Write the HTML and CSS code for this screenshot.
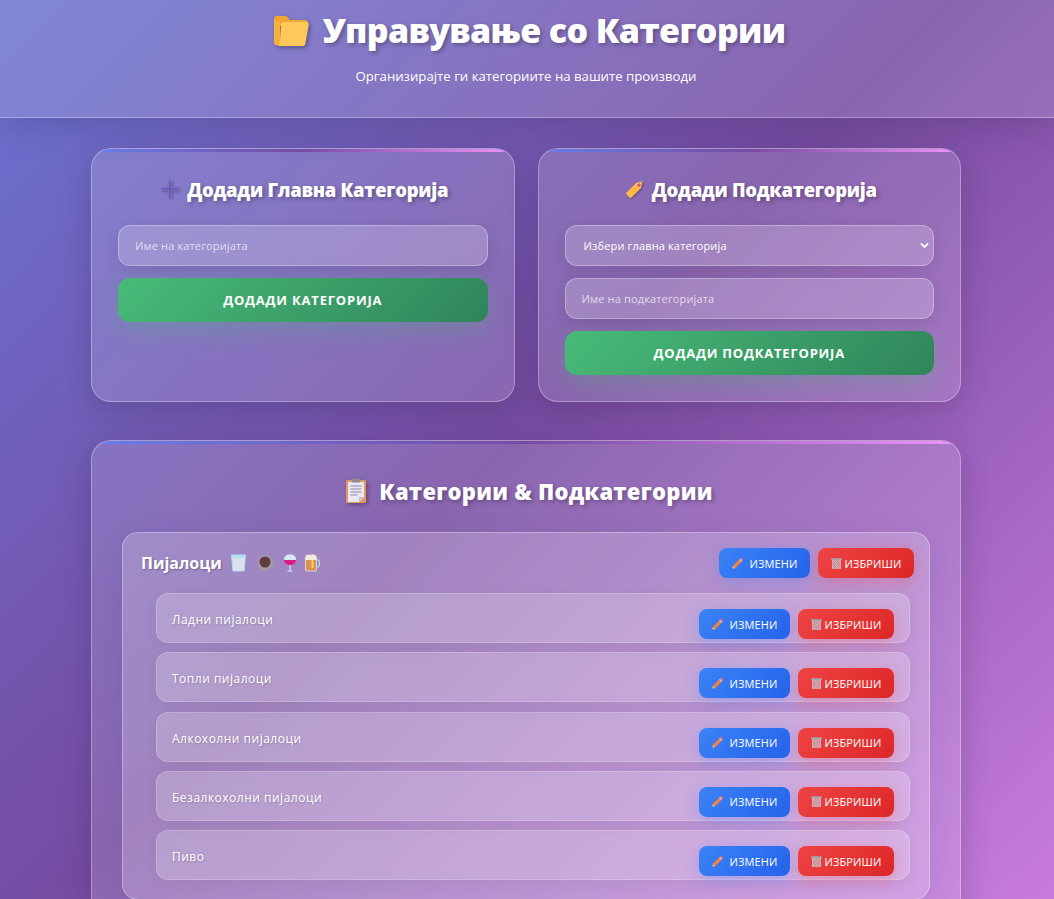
FILE: index.html
```html
<!DOCTYPE html>
<html lang="mk">
<head>
<meta charset="utf-8">
<title>Управување со Категории</title>
<link rel="stylesheet" href="styles.css">
</head>
<body>
<svg class="defs" width="0" height="0" aria-hidden="true">
  <defs>
    <symbol id="pencil" viewBox="0 0 16 16">
      <path d="M1.500 14.500l.8-3.600 2.800 2.800z" fill="#f6c9a0"/>
      <path d="M1.500 14.500l.3-1.400 1.100 1.100z" fill="#555"/>
      <path d="M2.300 10.900l7.600-7.600 2.800 2.800-7.600 7.600z" fill="#f7813c"/>
      <path d="M9.900 3.300l1.100-1.100 2.800 2.800-1.100 1.100z" fill="#e6c7bd"/>
      <path d="M11 2.200l.7-.7c.4-.4 1-.4 1.400 0l1.400 1.400c.4.4.4 1 0 1.400l-.7.700z" fill="#f36d7c"/>
    </symbol>
    <symbol id="trash" viewBox="0 0 16 16">
      <path d="M1.500 1.500h13v2.500h-13z" fill="#a4a4ac"/>
      <path d="M2.500 4h11v10.500h-11z" fill="#c8c8cf"/>
      <path d="M3 5l9 9M6 4.500l7 7M9 4.500l4 4M3 8l6 6M3 11l3 3M13 5l-9 9M10 4.500l-7 7M7 4.500l-4 4M13 8l-6 6M13 11l-3 3" stroke="#d8616e" stroke-width=".8" fill="none"/>
    </symbol>
  </defs>
</svg>
<header class="top">
  <h1 class="title">
    <svg class="emoji-title" viewBox="0 0 36 32"><path d="M1 4c0-2 1.500-3 3-3h8c1 0 2 .5 2.700 1.500L17 5h15c2 0 3 1.500 3 3v3H1z" fill="#f0a630"/><path d="M1 6h6v24H3c-1 0-2-1-2-2z" fill="#f5b13c"/><path d="M8 9.500C8.300 8 9.500 7 11 7h22c2 0 3 1.500 2.700 3l-3.400 19c-.3 1.500-1.500 2-2.700 2H3.500c2 0 3-1 3.300-2.500z" fill="#ffc95a"/></svg>
    <span>Управување со Категории</span>
  </h1>
  <p class="subtitle">Организирајте ги категориите на вашите производи</p>
</header>
<main class="wrap">
  <section class="forms">
    <div class="card">
      <h2 class="card-title">
        <svg class="emoji-h2" viewBox="0 0 20 20"><path d="M8.500 1.500h3v7h7v3h-7v7h-3v-7h-7v-3h7z" fill="#6f5ab5" stroke="#8a78c8" stroke-width=".6"/></svg>
        <span>Додади Главна Категорија</span>
      </h2>
      <div class="field placeholder">Име на категоријата</div>
      <div class="submit">ДОДАДИ КАТЕГОРИЈА</div>
    </div>
    <div class="card">
      <h2 class="card-title">
        <svg class="emoji-h2" viewBox="0 0 20 20"><path d="M1.500 13.500L11 4l5-1.500c.8-.2 1.500.5 1.300 1.300L16 9l-9.500 9.500c-.6.600-1.400.6-2 0l-3-3c-.6-.6-.6-1.400 0-2z" fill="#fdb845"/><circle cx="14" cy="6" r="1.600" fill="#d33a7c"/><path d="M14 6c1-3 3-5 5-4" stroke="#aab" stroke-width=".7" fill="none"/></svg>
        <span>Додади Подкатегорија</span>
      </h2>
      <div class="field select"><span>Избери главна категорија</span>
        <svg class="chev" viewBox="0 0 10 7"><path d="M1 1.200l4 4 4-4" fill="none" stroke="#fff" stroke-width="2"/></svg>
      </div>
      <div class="field placeholder">Име на подкатегоријата</div>
      <div class="submit">ДОДАДИ ПОДКАТЕГОРИЈА</div>
    </div>
  </section>
  <section class="card list-card">
    <h2 class="list-title">
      <svg class="emoji-list" viewBox="0 0 22 26"><rect x="1" y="2" width="20" height="23" rx="1.500" fill="#e09a5c"/><path d="M3 4h16v15l-5 5H3z" fill="#ebe6f2"/><path d="M14 24l5-5h-5z" fill="#c7bfd3"/><rect x="7" y="0.500" width="8" height="4" rx="1" fill="#8b8b94"/><path d="M5.500 8h11M5.500 11h11M5.500 14h11M5.500 17h7" stroke="#8f8a9e" stroke-width="1"/></svg>
      <span>Категории &amp; Подкатегории</span>
    </h2>
    <div class="cat">
      <div class="cat-head">
        <div class="cat-name">
          <span>Пијалоци</span>
          <span class="cat-icons">
            <svg class="drink cup" viewBox="0 0 16 18"><path d="M1 1h14l-1.500 16h-11z" fill="#dfe0ee" stroke="#a9e2f5" stroke-width="1"/><path d="M1.500 1h13v3h-13z" fill="#b6e0f0"/></svg>
            <svg class="drink coffee" viewBox="0 0 18 18"><ellipse cx="8" cy="9" rx="7.500" ry="8" fill="#a29aa6"/><circle cx="8" cy="8" r="5.500" fill="#5e3c42"/><path d="M15 8c3 0 3 5-1 5" stroke="#a29aa6" stroke-width="1.400" fill="none"/></svg>
            <svg class="drink wine" viewBox="0 0 14 18"><path d="M1 5.500C1 2.500 3 .5 7 .5s6 2 6 5-2.500 5.500-6 5.500-6-2.500-6-5.500z" fill="#d7e8f5"/><path d="M1 6h12c0 3-2.500 5-6 5s-6-2-6-5z" fill="#d81f86"/><path d="M7 11v6M4.500 17h5" stroke="#cfeaf5" stroke-width="1.200"/></svg>
            <svg class="drink beer" viewBox="0 0 16 18"><path d="M11 6h2.500c2 0 2 7 0 7H11" fill="none" stroke="#a9dff0" stroke-width="1.200"/><rect x="1" y="3" width="11" height="14" rx="1" fill="#dc9350" stroke="#cfeaf5" stroke-width=".8"/><path d="M1 2.500C1 .5 4 .5 5 1c2-1 6-1 7 1.500V6H1z" fill="#f3ead8"/><rect x="7" y="6" width="2" height="8" fill="#f5cf6e"/></svg>
          </span>
        </div>
        <div class="actions">
          <span class="btn blue"><svg class="ico"><use href="#pencil"/></svg><span class="btn-text">ИЗМЕНИ</span></span>
          <span class="btn red"><svg class="ico"><use href="#trash"/></svg><span>ИЗБРИШИ</span></span>
        </div>
      </div>
      <ul class="subs">
        <li class="sub"><span class="sub-name">Ладни пијалоци</span><div class="actions"><span class="btn blue"><svg class="ico"><use href="#pencil"/></svg><span class="btn-text">ИЗМЕНИ</span></span><span class="btn red"><svg class="ico"><use href="#trash"/></svg><span>ИЗБРИШИ</span></span></div></li>
        <li class="sub"><span class="sub-name">Топли пијалоци</span><div class="actions"><span class="btn blue"><svg class="ico"><use href="#pencil"/></svg><span class="btn-text">ИЗМЕНИ</span></span><span class="btn red"><svg class="ico"><use href="#trash"/></svg><span>ИЗБРИШИ</span></span></div></li>
        <li class="sub"><span class="sub-name">Алкохолни пијалоци</span><div class="actions"><span class="btn blue"><svg class="ico"><use href="#pencil"/></svg><span class="btn-text">ИЗМЕНИ</span></span><span class="btn red"><svg class="ico"><use href="#trash"/></svg><span>ИЗБРИШИ</span></span></div></li>
        <li class="sub"><span class="sub-name">Безалкохолни пијалоци</span><div class="actions"><span class="btn blue"><svg class="ico"><use href="#pencil"/></svg><span class="btn-text">ИЗМЕНИ</span></span><span class="btn red"><svg class="ico"><use href="#trash"/></svg><span>ИЗБРИШИ</span></span></div></li>
        <li class="sub"><span class="sub-name">Пиво</span><div class="actions"><span class="btn blue"><svg class="ico"><use href="#pencil"/></svg><span class="btn-text">ИЗМЕНИ</span></span><span class="btn red"><svg class="ico"><use href="#trash"/></svg><span>ИЗБРИШИ</span></span></div></li>
      </ul>
    </div>
  </section>
</main>
</body>
</html>
```
FILE: styles.css
```css
* { box-sizing: border-box; }
html, body { height: 100%; margin: 0; overflow: hidden; }
body {
  font-family: "Open Sans", "Noto Sans", sans-serif;
  color: #fff;
  background-image: linear-gradient(135deg, #6b72d2 0%, #764ba2 39%, #f093fb 100%);
  background-size: 100% 1387px;
  background-repeat: no-repeat;
}
.defs { position: absolute; }
.top {
  height: 118px;
  padding-top: 6px;
  text-align: center;
  background: rgba(255, 255, 255, 0.15);
  border-bottom: 1px solid rgba(255, 255, 255, 0.3);
  box-shadow: 0 8px 32px rgba(0, 0, 0, 0.14);
}
.title {
  margin: 0;
  padding-left: 4px;
  display: flex;
  justify-content: center;
  align-items: center;
  gap: 14px;
  font-size: 34px;
  line-height: 48px;
  font-weight: 800;
  letter-spacing: -0.65px;
  text-shadow: 2px 2px 4px rgba(0, 0, 0, 0.3);
}
.emoji-title { width: 36px; height: 32px; margin-top: 2px; filter: drop-shadow(2px 2px 2px rgba(0, 0, 0, 0.3)); }
.subtitle { margin: 13px 2px 0 0; font-size: 13.200px; line-height: 18px; font-weight: 500; }
.wrap { width: 870px; margin: 30px 93px 0 91px; }
.forms { display: grid; grid-template-columns: 1fr 1fr; gap: 23px; margin-bottom: 38px; }
.card {
  position: relative;
  overflow: hidden;
  padding: 26px;
  border: 1px solid rgba(255, 255, 255, 0.3);
  border-radius: 20px;
  background: rgba(255, 255, 255, 0.15);
  box-shadow: 0 8px 32px rgba(0, 0, 0, 0.16);
}
.card::before {
  content: "";
  position: absolute;
  top: 0; left: 0; right: 0;
  height: 3px;
  background: linear-gradient(90deg, #667eea, #764ba2, #f093fb);
}
.card-title {
  margin: 0 0 20px;
  padding: 0 0 2px 3px;
  display: flex;
  justify-content: center;
  align-items: center;
  gap: 7px;
  height: 30px;
  font-size: 18.500px;
  font-weight: 800;
  letter-spacing: -0.3px;
  text-shadow: 2px 2px 4px rgba(0, 0, 0, 0.3);
}
.emoji-h2 { width: 20px; height: 20px; filter: drop-shadow(1px 1px 1px rgba(0, 0, 0, 0.3)); }
.field {
  height: 41px;
  margin-bottom: 12px;
  padding: 0 16px;
  display: flex;
  align-items: center;
  font-size: 11px;
  letter-spacing: 0.15px;
  border: 1px solid rgba(255, 255, 255, 0.3);
  border-radius: 12px;
  background: rgba(255, 255, 255, 0.2);
  box-shadow: 0 4px 15px rgba(0, 0, 0, 0.1);
}
.placeholder { color: rgba(255, 255, 255, 0.7); }
.select { justify-content: space-between; padding: 0 4px 0 18px; }
.chev { width: 9px; height: 7px; }
.submit {
  height: 44px;
  display: flex;
  align-items: center;
  justify-content: center;
  border-radius: 12px;
  font-size: 13px;
  font-weight: 700;
  letter-spacing: 0.8px;
  background: linear-gradient(135deg, #48bb78, #2f855a);
  box-shadow: 0 8px 25px rgba(72, 187, 120, 0.3);
}
.list-card { padding: 31px 30px 30px; }
.list-title {
  margin: 0 0 23px;
  padding-left: 6px;
  display: flex;
  justify-content: center;
  align-items: center;
  gap: 12px;
  height: 37px;
  font-size: 22px;
  font-weight: 800;
  letter-spacing: 0.25px;
  text-shadow: 2px 2px 4px rgba(0, 0, 0, 0.3);
}
.emoji-list { width: 22px; height: 26px; filter: drop-shadow(2px 2px 2px rgba(0, 0, 0, 0.3)); }
.cat {
  padding: 15px 19px 19px 18px;
  border: 1px solid rgba(255, 255, 255, 0.3);
  border-radius: 16px;
  background: rgba(255, 255, 255, 0.2);
  box-shadow: 0 8px 32px rgba(31, 38, 135, 0.1);
}
.cat-head { display: flex; justify-content: space-between; align-items: center; margin-right: -4px; margin-bottom: 15px; }
.cat-name {
  display: flex;
  align-items: center;
  gap: 8px;
  font-size: 16px;
  font-weight: 700;
  text-shadow: 1px 1px 2px rgba(0, 0, 0, 0.3);
}
.cat-icons { display: flex; align-items: center; }
.drink { height: 18px; }
.cup { width: 17px; }
.coffee { width: 18px; margin-left: 10px; }
.wine { width: 14px; margin-left: 8px; }
.beer { width: 17px; margin-left: 7px; }
.actions { display: flex; gap: 8px; }
.btn {
  height: 30px;
  display: flex;
  align-items: center;
  justify-content: center;
  border-radius: 8px;
  font-size: 11px;
  font-weight: 500;
  letter-spacing: 0.15px;
}
.blue { width: 91px; background: linear-gradient(135deg, #3b82f6, #2563eb); box-shadow: 0 4px 15px rgba(59, 130, 246, 0.3); }
.red { width: 96px; background: linear-gradient(135deg, #ef4444, #dc2626); box-shadow: 0 4px 15px rgba(239, 68, 68, 0.3); }
.ico { width: 13px; height: 13px; margin-right: 1px; }
.btn-text { margin-left: 4px; }
.subs { list-style: none; margin: 0 0 0 15px; padding: 0; display: flex; flex-direction: column; gap: 9.250px; }
.sub {
  height: 50px;
  padding: 15px 15px 0 15px;
  display: flex;
  justify-content: space-between;
  align-items: flex-start;
  border: 1px solid rgba(255, 255, 255, 0.2);
  border-radius: 12px;
  background: rgba(255, 255, 255, 0.2);
  box-shadow: 0 4px 15px rgba(0, 0, 0, 0.05);
}
.sub-name { margin-top: 1px; font-size: 12px; line-height: 20px; letter-spacing: 0.5px; text-shadow: 1px 1px 2px rgba(0, 0, 0, 0.2); }
```
